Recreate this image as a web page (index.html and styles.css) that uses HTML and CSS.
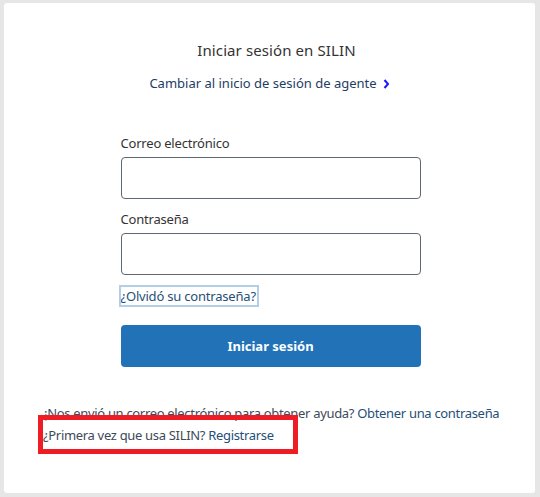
FILE: index.html
```html
<!DOCTYPE html>
<html lang="es">
<head>
<meta charset="utf-8">
<title>Iniciar sesión en SILIN</title>
<link rel="stylesheet" href="styles.css">
</head>
<body>
<main class="card">
  <h1 class="title">Iniciar sesión en SILIN</h1>
  <p class="switch"><a href="#" class="switch-link">Cambiar al inicio de sesión de agente</a> <span class="chev"><svg width="7" height="10" viewBox="0 0 7 10"><path d="M1.5 1 L5 5 L1.5 9" fill="none" stroke="#1a1aff" stroke-width="2"/></svg></span></p>
  <form class="form">
    <label class="label" for="email">Correo electrónico</label>
    <input class="input" id="email" type="text">
    <label class="label label-2" for="pwd">Contraseña</label>
    <input class="input" id="pwd" type="password">
    <div class="forgot-row"><a href="#" class="forgot">¿Olvidó su contraseña?</a></div>
    <button type="button" class="btn">Iniciar sesión</button>
  </form>
  <div class="help">
    <p class="help-line">¡Nos envió un correo electrónico para obtener ayuda? <a href="#" class="link">Obtener una contraseña</a></p>
    <p class="help-line first">¿Primera vez que usa SILIN? <a href="#" class="link">Registrarse</a></p>
  </div>
</main>
</body>
</html>
```
FILE: styles.css
```css
html, body {
  margin: 0;
  padding: 0;
}
body {
  background: #e6e6e6;
  padding: 3px 5px 4px 4px;
  font-family: "Noto Sans", "Open Sans", sans-serif;
  color: #333;
}
.card {
  background: #fff;
  height: 490px;
  border-radius: 3px;
  box-sizing: border-box;
  padding-top: 36px;
  display: flex;
  flex-direction: column;
  align-items: center;
}
.title {
  margin: 0 0 0 14px;
  font-size: 15px;
  font-weight: 400;
  line-height: 22px;
  color: #333;
  letter-spacing: 0.1px;
}
.switch {
  margin: 12px 0 0 0;
  font-size: 13px;
  line-height: 20px;
  display: flex;
  align-items: center;
  gap: 6px;
}
.switch-link {
  color: #1e3d63;
  text-decoration: none;
}
.chev {
  display: inline-flex;
  margin-top: 2px;
}
.form {
  width: 300px;
  margin-top: 41px;
  margin-left: 2px;
  display: flex;
  flex-direction: column;
}
.label {
  font-size: 13px;
  line-height: 18px;
  color: #333;
  margin-bottom: 5px;
  letter-spacing: -0.2px;
}
.label-2 {
  margin-top: 11px;
}
.input {
  height: 42px;
  box-sizing: border-box;
  border: 1px solid #5f6770;
  border-radius: 4px;
  margin: 0;
}
.forgot-row {
  margin-top: 12px;
  line-height: 0;
}
.forgot {
  display: inline-block;
  font-size: 13px;
  line-height: 18px;
  color: #264f78;
  text-decoration: none;
  outline: 2px solid #b3cfe8;
  outline-offset: 0;
  padding: 0 1px 0 0;
  letter-spacing: -0.2px;
}
.btn {
  margin-top: 20px;
  height: 42px;
  border: none;
  border-radius: 4px;
  background: #2272b8;
  color: #fff;
  font-family: "Noto Sans", "Open Sans", sans-serif;
  font-weight: 700;
  font-size: 13px;
}
.help {
  align-self: stretch;
  margin-top: 37px;
  padding-left: 40px;
}
.help-line {
  margin: 0;
  font-size: 13px;
  line-height: 18px;
  color: #3d4a5a;
  letter-spacing: -0.32px;
}
.help-line.first {
  display: inline-block;
  border: 5px solid #ee1c25;
  padding: 6px 19px 5px 0;
  margin-left: -6px;
  margin-top: -7px;
}
.link {
  color: #264f78;
  text-decoration: none;
}
```
